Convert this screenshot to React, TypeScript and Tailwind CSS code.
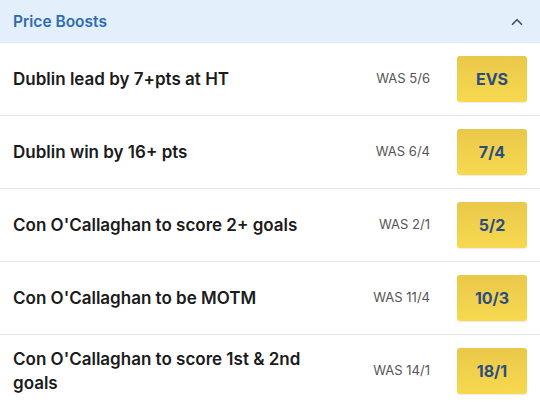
import { ChevronUp } from "lucide-react";

const boosts = [
  { name: "Dublin lead by 7+pts at HT", was: "5/6", price: "EVS" },
  { name: "Dublin win by 16+ pts", was: "6/4", price: "7/4" },
  { name: "Con O'Callaghan to score 2+ goals", was: "2/1", price: "5/2" },
  { name: "Con O'Callaghan to be MOTM", was: "11/4", price: "10/3" },
  { name: "Con O'Callaghan to score 1st & 2nd goals", was: "14/1", price: "18/1" },
];

export default function App() {
  return (
    <div className="w-[540px] h-[404px] overflow-hidden bg-white font-['Inter','Liberation_Sans',sans-serif]">
      <div className="h-[43px] flex items-center justify-between pl-[13px] pr-[14px] bg-[#e3f0fc]">
        <span className="text-[15.5px] font-semibold text-[#2f6bb2]">Price Boosts</span>
        <ChevronUp size={18} strokeWidth={2.2} className="text-[#3d4f66]" />
      </div>

      {boosts.map((b) => (
        <div
          key={b.name}
          className="h-[73px] flex items-center border-b border-[#e6e6e6] pl-[13px] pr-[13px]"
        >
          <div className="flex-1 pr-4">
            <p className="max-w-[330px] text-[17px] leading-[24px] font-semibold text-[#1b1b1b]">
              {b.name}
            </p>
          </div>
          <span className="text-[13px] text-[#555] mr-[27px]">WAS {b.was}</span>
          <div className="w-[70px] h-[46px] rounded-[3px] flex items-center justify-center bg-gradient-to-b from-[#eac84a] to-[#f7d94f] shadow-[0_1px_1px_rgba(0,0,0,0.08)]">
            <span className="text-[16px] font-bold text-[#2c4d80]">{b.price}</span>
          </div>
        </div>
      ))}
    </div>
  );
}
